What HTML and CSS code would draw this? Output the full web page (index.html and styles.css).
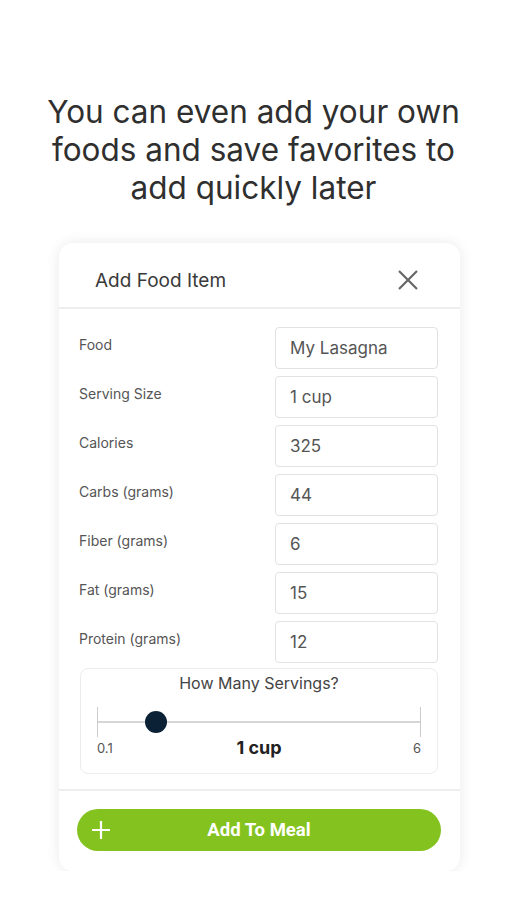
FILE: index.html
```html
<!DOCTYPE html>
<html lang="en">

<head>
    <meta charset="UTF-8">
    <meta name="viewport" content="width=device-width, initial-scale=1.0">
    <title>Add Food Item</title>
    <link rel="stylesheet" href="styles.css">
</head>

<body>
    <h1 class="headline">You can even add your own foods and save favorites to add quickly later</h1>

    <div class="card">
        <div class="card-header">
            <span class="card-title">Add Food Item</span>
            <svg class="close" width="22" height="22" viewBox="0 0 22 22">
                <path d="M2 2 L20 20 M20 2 L2 20" stroke="#666" stroke-width="2.2" fill="none" />
            </svg>
        </div>

        <div class="card-body">
            <div class="row"><label>Food</label><div class="field">My Lasagna</div></div>
            <div class="row"><label>Serving Size</label><div class="field">1 cup</div></div>
            <div class="row"><label>Calories</label><div class="field">325</div></div>
            <div class="row"><label>Carbs (grams)</label><div class="field">44</div></div>
            <div class="row"><label>Fiber (grams)</label><div class="field">6</div></div>
            <div class="row"><label>Fat (grams)</label><div class="field">15</div></div>
            <div class="row"><label>Protein (grams)</label><div class="field">12</div></div>

            <div class="servings">
                <div class="servings-title">How Many Servings?</div>
                <div class="slider">
                    <div class="track"></div>
                    <div class="thumb"></div>
                </div>
                <div class="slider-labels">
                    <span>0.1</span>
                    <span class="current">1 cup</span>
                    <span class="max">6</span>
                </div>
            </div>
        </div>

        <div class="card-footer">
            <button class="add-btn">
                <svg class="plus" width="20" height="20" viewBox="0 0 20 20">
                    <path d="M10 1 V19 M1 10 H19" stroke="#fff" stroke-width="2.2" fill="none" />
                </svg>
                Add To Meal
            </button>
        </div>
    </div>
</body>

</html>
```

FILE: styles.css
```css
body {
    font-family: "Open Sans", Arial, sans-serif;
    background-color: #fff;
    margin: 0;
    padding: 0;
}

.headline {
    font-family: "Inter", "Open Sans", sans-serif;
    font-weight: 400;
    font-size: 31.5px;
    line-height: 38px;
    color: #2f2f2f;
    text-align: center;
    margin: 93px 30px 0;
}

.card {
    width: 401px;
    margin: 36px 0 0 59px;
    background-color: white;
    border-radius: 14px;
    box-shadow: 0 0 14px rgba(0, 0, 0, 0.09);
}

.card-header {
    height: 66px;
    box-sizing: border-box;
    display: flex;
    align-items: center;
    justify-content: space-between;
    padding: 10px 41px 0 36px;
    border-bottom: 2px solid #eee;
}

.card-title {
    font-family: "Inter", sans-serif;
    font-size: 19px;
    color: #3a3a3a;
}

.card-body {
    padding: 18px 22px 15px 20px;
}

.row {
    display: flex;
    justify-content: space-between;
    margin-bottom: 7px;
}

.row:nth-child(7) {
    margin-bottom: 5px;
}

.row label {
    font-family: "Inter", sans-serif;
    font-size: 14px;
    color: #555;
    padding-top: 9px;
}

.field {
    width: 161px;
    height: 40px;
    border: 1px solid #e2e2e2;
    border-radius: 4px;
    font-family: "Inter", sans-serif;
    font-size: 17px;
    color: #555;
    line-height: 40px;
    text-indent: 14px;
}

.servings {
    margin: 0 0 0 1px;
    border: 1px solid #ececec;
    border-radius: 8px;
    padding: 4px 16px 15px;
}

.servings-title {
    font-family: "Inter", sans-serif;
    font-size: 16px;
    color: #444;
    text-align: center;
}

.slider {
    position: relative;
    height: 30px;
    margin-top: 14px;
    border-left: 1px solid #ccc;
    border-right: 1px solid #ccc;
}

.track {
    position: absolute;
    left: 0;
    right: 0;
    top: 14px;
    height: 2px;
    background-color: #d6d6d6;
}

.thumb {
    position: absolute;
    left: 47px;
    top: 4px;
    width: 22px;
    height: 22px;
    border-radius: 50%;
    background-color: #0b2236;
}

.slider-labels {
    display: grid;
    grid-template-columns: 1fr auto 1fr;
    align-items: center;
    font-family: "Inter", sans-serif;
    font-size: 13px;
    color: #555;
}

.slider-labels .current {
    font-size: 18px;
    font-weight: 700;
    color: #222;
}

.slider-labels .max {
    text-align: right;
}

.card-footer {
    border-top: 2px solid #eee;
    padding: 18px 19px 20px 18px;
}

.add-btn {
    width: 100%;
    height: 42px;
    border: none;
    border-radius: 21px;
    background-color: #84c31f;
    color: white;
    font-family: "Roboto", sans-serif;
    font-weight: 700;
    font-size: 18.5px;
    position: relative;
    cursor: pointer;
}

.plus {
    position: absolute;
    left: 14px;
    top: 11px;
}
```
